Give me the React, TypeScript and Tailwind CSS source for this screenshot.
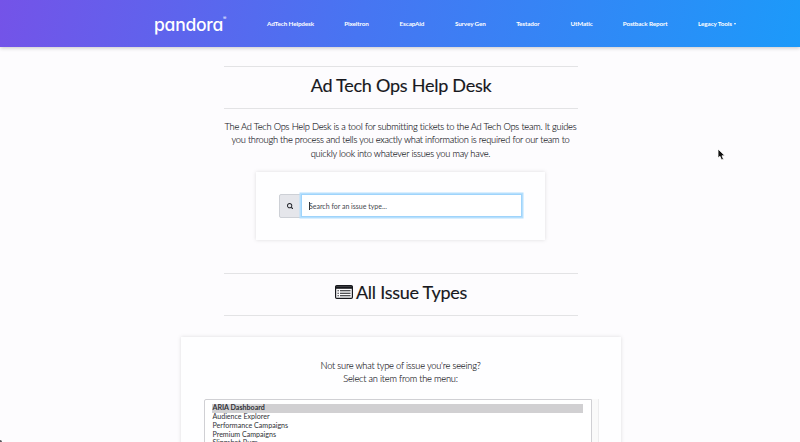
import React from "react";
import { FaSearch } from "react-icons/fa";

const navItems = [
  { label: "AdTech Helpdesk", width: "w-[47px]" },
  { label: "Pixeltron", width: "w-[25px]" },
  { label: "EscapAid", width: "w-[25px]" },
  { label: "Survey Gen", width: "w-[31px]" },
  { label: "Testador", width: "w-[24px]" },
  { label: "UtMatic", width: "w-[22px]" },
  { label: "Postback Report", width: "w-[45px]" },
  { label: "Legacy Tools", width: "w-[40px]", caret: true },
];

const issueTypes = [
  "ARIA Dashboard",
  "Audience Explorer",
  "Performance Campaigns",
  "Premium Campaigns",
  "Slingshot Bugs",
];

function Logo() {
  return (
    <div className="flex w-[113px] items-start pt-[2px] font-['Inter',sans-serif] text-white">
      <span className="text-[17.5px] font-medium leading-[22px] tracking-[-0.25px] [font-feature-settings:'cv11']">pandora</span>
      <span className="mt-[2px] text-[5px] leading-[5px]">®</span>
    </div>
  );
}

function ListIcon() {
  return (
    <svg viewBox="0 0 18 14" className="mr-[3px] h-[14px] w-[18px]" fill="none" stroke="#17181d">
      <rect x="0.6" y="0.6" width="16.8" height="12.8" rx="1.2" strokeWidth="1.2" />
      <path d="M.6 1.2h16.8v2.6H.6z" fill="#17181d" stroke="none" />
      <path d="M2.5 5.7h1.3M2.5 8.2h1.3M2.5 10.7h1.3M5 5.7h10.5M5 8.2h10.5M5 10.7h10.5" strokeWidth="1.1" />
    </svg>
  );
}

function SectionHeading({ children }: { children: React.ReactNode }) {
  return (
    <div className="ml-px flex h-[43px] w-[354px] items-center justify-center border-y border-[#e3e3e5] pb-[5px]">
      <h1 className="flex items-center whitespace-nowrap text-[18px] leading-[22px] tracking-[-0.25px] text-[#17181d] [-webkit-text-stroke:0.15px_#17181d]">
        {children}
      </h1>
    </div>
  );
}

export default function App() {
  return (
    <div className="relative flex h-[442px] w-[800px] flex-col overflow-hidden bg-[#fdfcfe] font-['Lato',sans-serif]">
      <header className="flex h-[47px] shrink-0 items-center bg-[linear-gradient(100deg,#7453e8_0%,#4775f2_45%,#1c9afa_100%)] pl-[154px] shadow-[0_1px_4px_rgba(0,0,0,0.22)]">
        <Logo />
        <nav className="flex gap-[30.3px] whitespace-nowrap text-[6.3px] font-bold leading-[10px] tracking-[-0.11px] text-white">
          {navItems.map((item) => (
            <a key={item.label} className={`${item.width} flex items-center`}>
              {item.label}
              {item.caret && (
                <span className="ml-[2px] h-0 w-0 border-x-[1.5px] border-t-[2px] border-x-transparent border-t-white" />
              )}
            </a>
          ))}
        </nav>
      </header>

      <main className="flex flex-col items-center pl-px pt-[19px]">
        <SectionHeading>Ad Tech Ops Help Desk</SectionHeading>
        <p className="mt-[11px] whitespace-nowrap text-center text-[9.3px] font-light leading-[13.3px] tracking-[-0.23px] text-[#17181d] [-webkit-text-stroke:0.1px_#17181d]">
          The Ad Tech Ops Help Desk is a tool for submitting tickets to the Ad Tech Ops team. It guides
          <br />
          you through the process and tells you exactly what information is required for our team to
          <br />
          quickly look into whatever issues you may have.
        </p>

        <section className="mt-[12px] flex h-[68px] w-[289px] items-center bg-[#fefeff] pl-[23px] shadow-[0_0_4px_rgba(0,0,0,0.13)]">
          <div className="flex h-[24px] w-[22px] items-center justify-center rounded-l-[2px] border border-[#cdd0d6] bg-[#e5e6eb]">
            <FaSearch className="h-[6.5px] w-[6.5px] text-[#222329]" />
          </div>
          <div className="flex h-[23px] w-[221px] items-center border border-[#9fd4fb] bg-white pl-[7px] shadow-[0_0_0_1.5px_#b5dffd]">
            <span className="h-[8px] w-px bg-[#333]" />
            <span className="-ml-px text-[7px] leading-[10px] text-[#45484e]">Search for an issue type...</span>
          </div>
        </section>

        <div className="mt-[33px]">
          <SectionHeading>
            <ListIcon />
            All Issue Types
          </SectionHeading>
        </div>

        <section className="mt-[21px] flex h-[140px] w-[440px] shrink-0 flex-col items-center bg-[#fefeff] pt-[22px] shadow-[0_0_4px_rgba(0,0,0,0.13)]">
          <p className="text-center text-[9.3px] font-light leading-[13.3px] tracking-[-0.22px] text-[#17181d] [-webkit-text-stroke:0.1px_#17181d]">
            Not sure what type of issue you&apos;re seeing?
            <br />
            Select an item from the menu:
          </p>
          <div className="ml-px mt-[14px] flex h-[80px] w-[395px]">
            <ul className="w-[388px] rounded-tl-[2px] border border-[#d0d0d4] bg-white pl-[7px] pr-[8px] pt-[4px] text-[7.1px] leading-[8.75px] text-[#303136]">
              {issueTypes.map((issue, index) => (
                <li key={issue} className={index === 0 ? "bg-[#d1d0d2] pl-px font-bold" : "pl-px"}>
                  {issue}
                </li>
              ))}
            </ul>
            <div className="w-[7px] border-r border-[#ededee] bg-[#fafafa]" />
          </div>
        </section>
      </main>

      <svg className="absolute left-[717px] top-[148px] h-[13px] w-[9px]" viewBox="0 0 9 13">
        <path d="M1 1v9l2-1.7L4.5 12l2-.8L5 7.8h3z" fill="#111" stroke="#fff" strokeWidth=".8" />
      </svg>
      <span className="absolute bottom-0 left-0 h-[2px] w-[2px] rounded-tr-sm bg-[#55555a]" />
    </div>
  );
}
